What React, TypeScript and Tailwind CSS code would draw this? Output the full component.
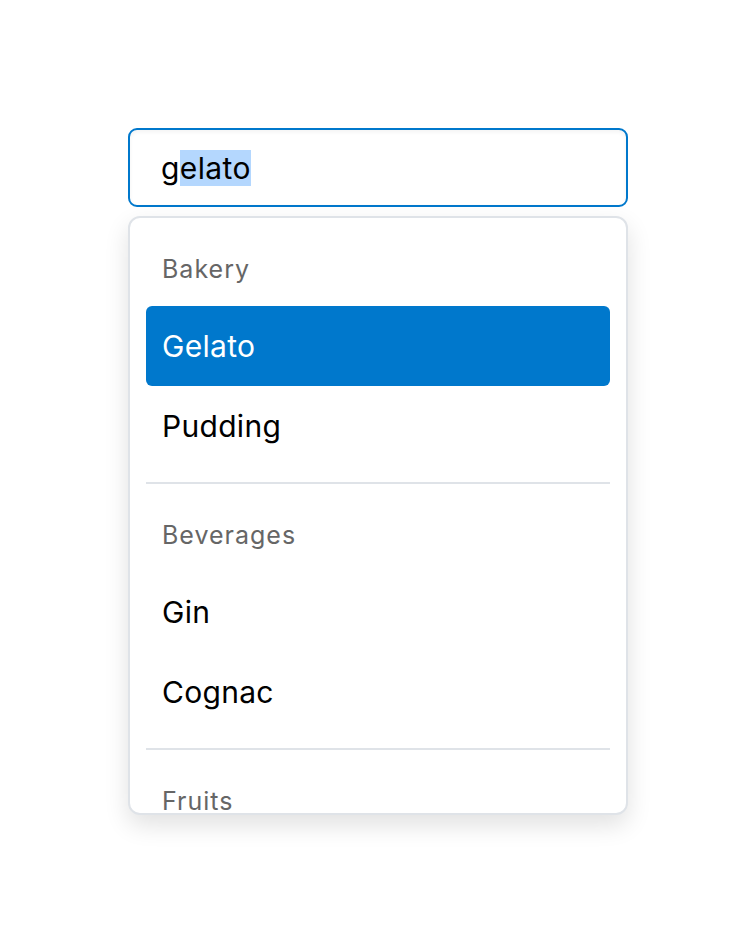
const groups = [
  { label: 'Bakery', items: ['Gelato', 'Pudding'] },
  { label: 'Beverages', items: ['Gin', 'Cognac'] },
  { label: 'Fruits', items: [] as string[] },
];

export default function App() {
  return (
    <div className="min-h-screen bg-white pt-[128px] font-['Inter',sans-serif]">
      <div className="mx-auto w-[500px]">
        {/* Combobox input */}
        <div className="h-[79px] rounded-[9px] border-2 border-[#0078cc] bg-white pl-[31px] flex items-center shadow-[inset_0_2px_4px_rgba(0,0,0,0.05)]">
          <span className="text-[30px] leading-[38px] tracking-[0.4px] text-black">
            g<span className="bg-[#b4d7fe]">elato</span>
          </span>
        </div>

        {/* Listbox */}
        <div className="mt-[9px] h-[599px] overflow-hidden rounded-[12px] border-2 border-[#dfe3e8] bg-white px-4 pt-4 shadow-[0_10px_24px_rgba(0,0,0,0.12)]">
          {groups.map((group, gi) => (
            <div key={group.label}>
              {gi > 0 && <div className="my-4 h-[2px] bg-[#dfe3e8]" />}
              <div className="h-[72px] flex items-center px-4 text-[25px] tracking-[1px] text-[#666666]">{group.label}</div>
              {group.items.map((item) => {
                const active = item === 'Gelato';
                return (
                  <div
                    key={item}
                    className={
                      active
                        ? 'h-[80px] flex items-center px-4 rounded-[6px] bg-[#0078cc] text-white text-[30px] tracking-[0.3px]'
                        : 'h-[80px] flex items-center px-4 text-black text-[30px] tracking-[0.3px]'
                    }
                  >
                    {item}
                  </div>
                );
              })}
            </div>
          ))}
        </div>
      </div>
    </div>
  );
}
